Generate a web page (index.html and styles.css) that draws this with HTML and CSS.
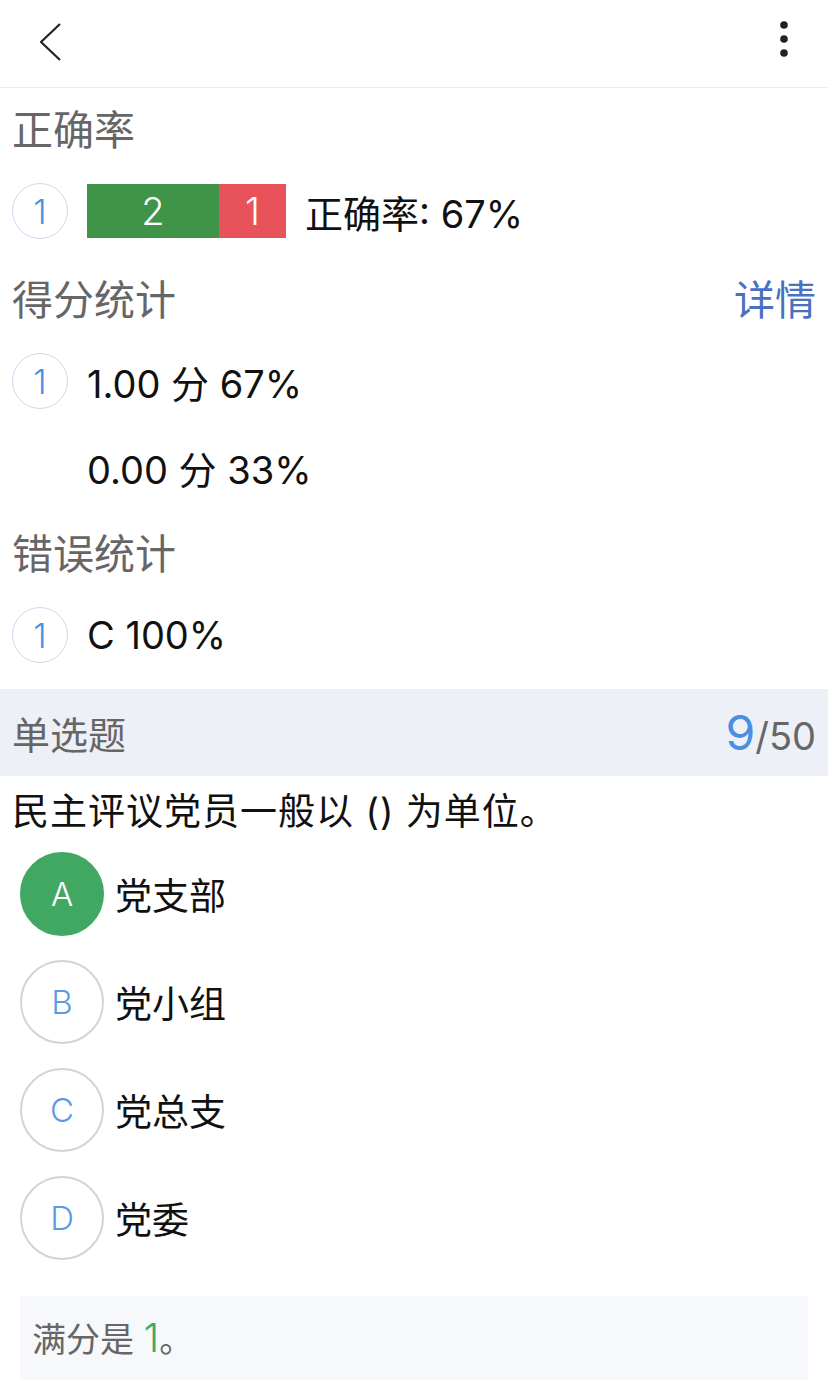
FILE: index.html
```html
<!DOCTYPE html>
<html>
<head>
    <meta charset="UTF-8">
    <meta name="viewport" content="width=device-width, initial-scale=1.0">
    <title>单选题</title>
    <link rel="stylesheet" href="styles.css">
</head>
<body>
    <div class="topbar">
        <svg class="back" width="40" height="50" viewBox="0 0 40 50">
            <polyline points="31,8 12,26 31,44" fill="none" stroke="#222" stroke-width="2.2" stroke-linejoin="round"/>
        </svg>
        <svg class="more" width="20" height="50" viewBox="0 0 20 50">
            <circle cx="10" cy="11" r="3.8" fill="#222"/>
            <circle cx="10" cy="25" r="3.8" fill="#222"/>
            <circle cx="10" cy="39" r="3.8" fill="#222"/>
        </svg>
    </div>

    <div class="stats">
        <div class="section-title first">正确率</div>
        <div class="stat-row first-row">
            <span class="num-circle">1</span>
            <div class="bar">
                <span class="bar-right" style="width: 132px">2</span>
                <span class="bar-wrong" style="width: 67px">1</span>
            </div>
            <span class="stat-text">正确率: 67%</span>
        </div>

        <div class="section-title">
            <span>得分统计</span>
            <span class="link">详情</span>
        </div>
        <div class="stat-row">
            <span class="num-circle">1</span>
            <span class="stat-text">1.00 分 67%</span>
        </div>
        <div class="stat-row">
            <span class="num-circle empty"></span>
            <span class="stat-text">0.00 分 33%</span>
        </div>

        <div class="section-title">错误统计</div>
        <div class="stat-row">
            <span class="num-circle">1</span>
            <span class="stat-text">C 100%</span>
        </div>
    </div>

    <div class="question-bar">
        <span>单选题</span>
        <span class="counter"><span class="current">9</span>/50</span>
    </div>

    <div class="question">民主评议党员一般以 () 为单位。</div>

    <ul class="options">
        <li><span class="letter chosen">A</span>党支部</li>
        <li><span class="letter">B</span>党小组</li>
        <li><span class="letter">C</span>党总支</li>
        <li><span class="letter">D</span>党委</li>
    </ul>

    <div class="score-box">满分是 <span class="score">1</span>。</div>
</body>
</html>
```

FILE: styles.css
```css
body {
    font-family: "Inter", "Noto Sans CJK SC", sans-serif;
    background-color: white;
    margin: 0;
    padding: 0;
    color: #111;
}

.topbar {
    height: 88px;
    box-sizing: border-box;
    border-bottom: 1px solid #ececec;
    display: flex;
    justify-content: space-between;
    align-items: center;
    padding: 0 34px 0 29px;
}

.back {
    margin-top: -6px;
}

.more {
    margin-top: -10px;
}

.section-title {
    height: 82px;
    display: flex;
    justify-content: space-between;
    align-items: center;
    padding: 0 12px;
    font-size: 41px;
    color: #666;
}

.section-title.first {
    height: 78px;
}

.link {
    color: #4a70c2;
}

.stat-row {
    height: 86px;
    display: flex;
    align-items: center;
    padding-left: 12px;
}

.stat-row.first-row {
    height: 90px;
}

.num-circle {
    width: 56px;
    height: 56px;
    box-sizing: border-box;
    border: 1.5px solid #cbdaee;
    border-radius: 50%;
    display: flex;
    align-items: center;
    justify-content: center;
    color: #4a90e2;
    font-size: 34px;
    font-weight: 300;
    margin-right: 19px;
    flex-shrink: 0;
}

.num-circle.empty {
    visibility: hidden;
}

.bar {
    display: flex;
    height: 54px;
    margin-right: 19px;
}

.bar span {
    display: flex;
    align-items: center;
    justify-content: center;
    color: white;
    font-size: 38px;
    font-weight: 300;
}

.bar-right {
    background-color: #3f9447;
}

.bar-wrong {
    background-color: #e8535b;
}

.stat-text {
    font-size: 38px;
    color: #111;
}

.stats {
    margin-bottom: 11px;
}

.question-bar {
    height: 87px;
    background-color: #edf0f7;
    display: flex;
    justify-content: space-between;
    align-items: center;
    padding: 0 12px;
    font-size: 38px;
    color: #666;
}

.counter {
    font-size: 38px;
    color: #666;
}

.current {
    font-size: 48px;
    color: #4a8fe2;
}

.question {
    height: 64px;
    line-height: 72px;
    padding: 0 12px;
    font-size: 37px;
    letter-spacing: 1px;
    color: #111;
}

.options {
    list-style: none;
    margin: 0;
    padding: 0;
}

.options li {
    height: 108px;
    display: flex;
    align-items: center;
    padding-left: 20px;
    font-size: 37px;
    color: #111;
}

.letter {
    width: 84px;
    height: 84px;
    box-sizing: border-box;
    border: 2px solid #d4d4d4;
    border-radius: 50%;
    display: flex;
    align-items: center;
    justify-content: center;
    color: #5a9be6;
    font-size: 33px;
    font-weight: 300;
    margin-right: 11px;
}

.letter.chosen {
    background-color: #41a863;
    border-color: #41a863;
    color: white;
}

.score-box {
    margin: 24px 20px 0;
    height: 84px;
    line-height: 84px;
    background-color: #f7f8fc;
    padding: 0 12px;
    font-size: 34px;
    color: #666;
}

.score {
    color: #41a863;
    font-size: 40px;
    font-weight: 300;
}
```
